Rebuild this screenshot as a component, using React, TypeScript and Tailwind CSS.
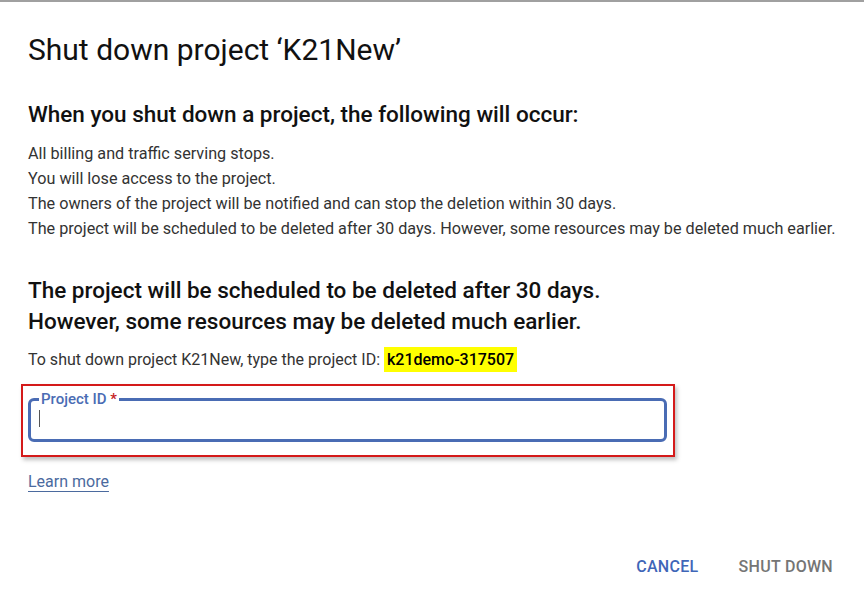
export default function App() {
  return (
    <div className="w-[864px] h-[606px] bg-white border-t-2 border-[#a0a0a0] font-['Roboto',sans-serif] text-[#202124] flex flex-col">
      <div className="px-[28px] pt-[29px] flex flex-col">
        <h1 className="text-[30px] leading-[38px] text-[#111]">Shut down project ‘K21New’</h1>

        <h2 className="mt-[30px] text-[22.5px] leading-[30px] font-medium text-[#111]">
          When you shut down a project, the following will occur:
        </h2>
        <ul className="mt-[12px] text-[16.2px] leading-[25px] text-[#333]">
          <li>All billing and traffic serving stops.</li>
          <li>You will lose access to the project.</li>
          <li>The owners of the project will be notified and can stop the deletion within 30 days.</li>
          <li>The project will be scheduled to be deleted after 30 days. However, some resources may be deleted much earlier.</li>
        </ul>

        <h2 className="mt-[34px] text-[22.5px] leading-[31px] font-medium text-[#111]">
          The project will be scheduled to be deleted after 30 days.
          <br />
          However, some resources may be deleted much earlier.
        </h2>

        <p className="mt-[10px] text-[16px] leading-[25px] text-[#333]">
          To shut down project K21New, type the project ID:{' '}
          <span className="bg-[#ffff00] font-medium text-black px-[3px] py-[3px]">k21demo-317507</span>
        </p>
      </div>

      <div className="ml-[21px] mt-[12px] w-[654px] border-2 border-[#d41a1a] shadow-[2px_3px_4px_rgba(0,0,0,0.25)] pt-[4px] pl-[5px] pr-[6px] pb-[13px]">
        <fieldset className="border-[3px] border-[#4a6cb4] rounded-[6px] h-[52px] px-[8px]">
          <legend className="px-[2px] text-[15px] leading-[18px] font-medium text-[#4a6cb4]">
            Project ID <span className="text-[#c5221f]">*</span>
          </legend>
          <div className="mt-[2px] w-[1px] h-[17px] bg-[#555]" />
        </fieldset>
      </div>

      <div className="px-[28px] mt-[13px]">
        <a className="text-[16px] leading-[20px] text-[#4b6a9e] underline underline-offset-[4px] decoration-[#4b6a9e]">Learn more</a>
      </div>

      <div className="mt-auto mb-[27px] flex justify-end gap-[40px] pr-[31px] text-[16px] font-medium tracking-[0.3px]">
        <button className="text-[#3f66b8]">CANCEL</button>
        <button className="text-[#757575]">SHUT DOWN</button>
      </div>
    </div>
  )
}
